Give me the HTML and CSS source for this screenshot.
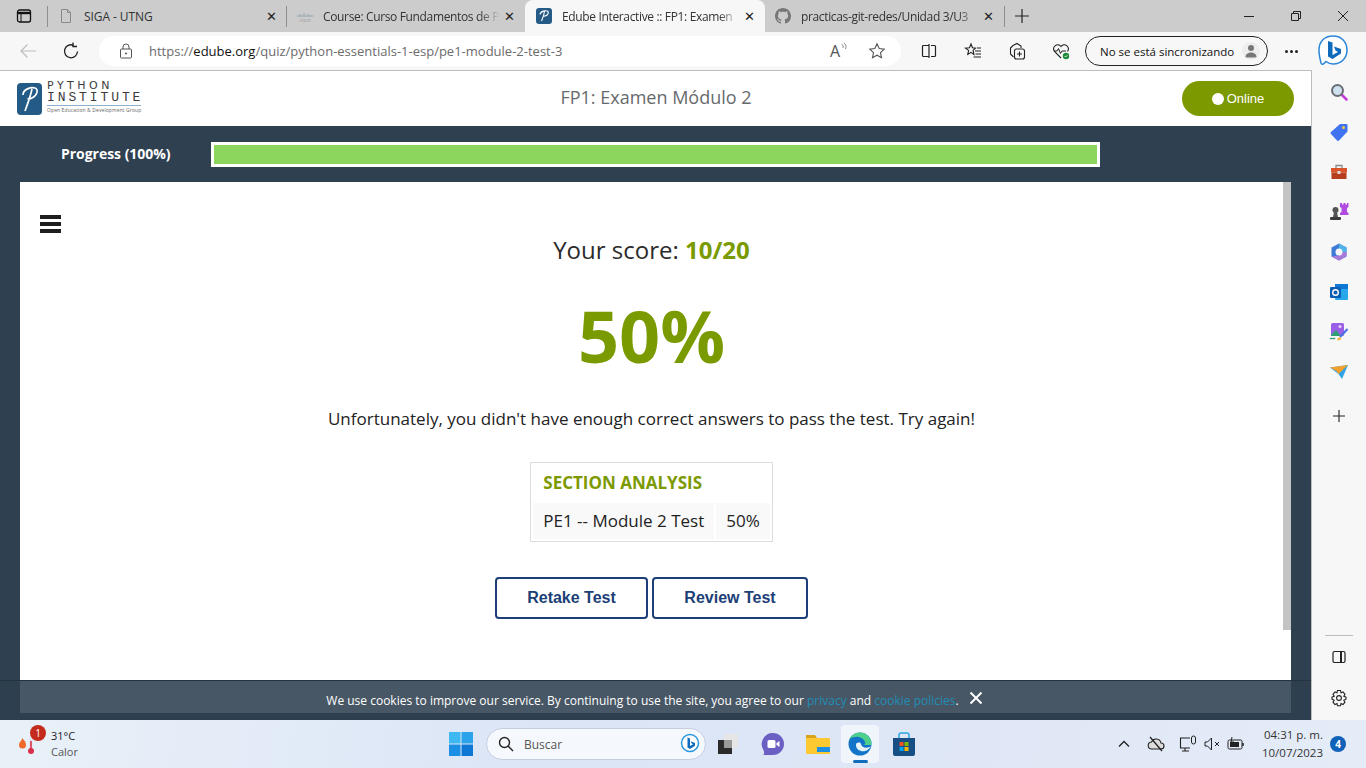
FILE: index.html
```html
<!DOCTYPE html>
<html lang="en">
<head>
  <meta charset="UTF-8" />
  <title>Edube Interactive :: FP1: Examen Módulo 2</title>
  <link rel="stylesheet" href="styles.css">
</head>
<body>

  <!-- Tabs -->
  <div class="tabstrip">
    <svg class="tab-menu" width="16" height="16" viewBox="0 0 16 16"><rect x="1.500" y="2" width="13" height="12" rx="2" fill="none" stroke="#111" stroke-width="1.300"/><path d="M1.500 5h13" stroke="#111" stroke-width="2.400"/><path d="M5 5v9" stroke="#111" stroke-width="1"/></svg>
    <span class="tab-sep first"></span>
    <div class="tab tab-siga">
      <svg width="16" height="16" viewBox="0 0 16 16"><path d="M3.500 1.500h6l3 3v10h-9z M9.500 1.500v3h3" fill="none" stroke="#8a8a8a"/></svg>
      <span class="tab-title">SIGA - UTNG</span>
      <span class="tab-x">✕</span>
    </div>
    <span class="tab-sep"></span>
    <div class="tab tab-course">
      <svg width="16" height="16" viewBox="0 0 16 16"><path d="M1 7v2M3 6v3M5 7v2M7 5v4M9 7v2M11 6v3M13 7v2M15 7v2" stroke="#8fa0a8" stroke-width="1"/><text x="8" y="14" font-size="5" text-anchor="middle" fill="#9a9a9a">cisco</text></svg>
      <span class="tab-title tab-fade">Course: Curso Fundamentos de P</span>
      <span class="tab-x">✕</span>
    </div>
    <div class="tab tab-active">
      <svg width="16" height="16" viewBox="0 0 16 16"><rect width="16" height="16" rx="3" fill="#235a86"/><path d="M5.500 13C7 9.500 8 6.500 8.500 3.500M4 6.500C4.500 3 10 2 12 3.500C13 5 11.500 7.500 9 8C8 8.200 7.200 8 6.800 7.800" fill="none" stroke="#fff" stroke-width="1.100"/></svg>
      <span class="tab-title tab-fade">Edube Interactive :: FP1: Examen</span>
      <span class="tab-x">✕</span>
    </div>
    <div class="tab tab-git">
      <svg width="16" height="16" viewBox="0 0 16 16"><path fill="#777" d="M8 0C3.580 0 0 3.580 0 8c0 3.540 2.290 6.530 5.470 7.590.4.070.55-.17.55-.38 0-.19-.01-.82-.01-1.490-2.010.37-2.530-.49-2.690-.94-.09-.23-.48-.94-.82-1.130-.28-.15-.68-.52-.01-.53.63-.01 1.080.58 1.230.82.720 1.210 1.870.87 2.330.66.070-.52.280-.87.510-1.070-1.780-.2-3.640-.89-3.640-3.950 0-.87.310-1.590.820-2.150-.08-.2-.36-1.020.08-2.120 0 0 .67-.21 2.200.82.640-.18 1.320-.27 2-.27s1.360.09 2 .27c1.530-1.040 2.200-.82 2.200-.82.440 1.100.160 1.920.08 2.120.51.560.820 1.270.820 2.150 0 3.070-1.870 3.750-3.650 3.950.290.250.540.730.540 1.480 0 1.070-.01 1.930-.01 2.200 0 .210.150.460.550.380A8.010 8.010 0 0 0 16 8c0-4.420-3.580-8-8-8z"/></svg>
      <span class="tab-title tab-fade">practicas-git-redes/Unidad 3/U3</span>
      <span class="tab-x">✕</span>
    </div>
    <span class="tab-sep"></span>
    <svg class="tab-new" width="16" height="16" viewBox="0 0 16 16"><path d="M8 1v14M1 8h14" stroke="#222" stroke-width="1.200"/></svg>
    <div class="win-buttons">
      <svg width="12" height="12" viewBox="0 0 12 12"><path d="M1 6.500h10" stroke="#222"/></svg>
      <svg width="12" height="12" viewBox="0 0 12 12"><path d="M3.500 3V1.500h7v7H9M1.500 3.500h7v7h-7z" fill="none" stroke="#222"/></svg>
      <svg width="12" height="12" viewBox="0 0 12 12"><path d="M1 1l10 10M11 1L1 11" stroke="#222"/></svg>
    </div>
  </div>

  <!-- Address bar -->
  <div class="toolbar">
    <svg class="tb-back" width="18" height="18" viewBox="0 0 18 18"><path d="M17 9H2M8.500 2.500L2 9l6.500 6.500" fill="none" stroke="#bdbdbd" stroke-width="1.200"/></svg>
    <svg class="tb-reload" width="18" height="18" viewBox="0 0 18 18"><path d="M15.500 9.500A6.500 6.500 0 1 1 11.500 3.300" fill="none" stroke="#222" stroke-width="1.300"/><path d="M11 0.500v4h4" fill="none" stroke="#222" stroke-width="1.300"/></svg>
    <div class="urlbar">
      <svg width="14" height="16" viewBox="0 0 14 16"><path d="M4 6V4a3 3 0 0 1 6 0v2" fill="none" stroke="#555"/><rect x="1.500" y="6" width="11" height="9" rx="1" fill="none" stroke="#555"/><circle cx="7" cy="10.500" r="1" fill="#555"/></svg>
      <span class="url">https://<b>edube.org</b>/quiz/python-essentials-1-esp/pe1-module-2-test-3</span>
      <span class="read-aloud">A</span>
      <svg class="read-waves" width="6" height="8" viewBox="0 0 6 8"><path d="M0.500 1C2 2 2.500 3.500 2 5M3 0C5 1.500 5.500 4 4.500 6" fill="none" stroke="#666" stroke-width=".8"/></svg>
      <svg class="url-star" width="18" height="18" viewBox="0 0 18 18"><path d="M9 1.800l2.200 4.700 5 .6-3.700 3.500 1 5.100L9 13.200l-4.500 2.500 1-5.100L1.800 7.100l5-.6z" fill="none" stroke="#555" stroke-width="1.100"/></svg>
    </div>
    <div class="tb-icons">
      <svg width="18" height="18" viewBox="0 0 18 18"><path d="M9 2v14M9 3.500H3.500a1 1 0 0 0-1 1v9a1 1 0 0 0 1 1H9M11 3.500h3.500a1 1 0 0 1 1 1v9a1 1 0 0 1-1 1H11" fill="none" stroke="#222" stroke-width="1.200"/></svg>
      <svg width="18" height="18" viewBox="0 0 18 18"><path d="M7 2l1.500 3.800 3 .3-2.400 2.300.8 4L7 10.300 3.800 12.400l.8-4L1.500 6.100l4-.3z" fill="none" stroke="#222" stroke-width="1.100"/><path d="M11 9h6M11.500 12h5.500M9.500 15h7.500M13 6h4" stroke="#222" stroke-width="1.100"/></svg>
      <svg width="18" height="18" viewBox="0 0 18 18"><path d="M5 3.500L2.500 6v6l3 3M5 3.500L9 1.500l4 2.500v2" fill="none" stroke="#222" stroke-width="1.100"/><rect x="6.500" y="7" width="10" height="10" rx="2" fill="none" stroke="#222" stroke-width="1.100"/><path d="M11.500 9.500v5M9 12h5" stroke="#222" stroke-width="1.100"/></svg>
      <svg width="18" height="18" viewBox="0 0 18 18"><path d="M9 16L2.500 9.500C-.500 5 5.500 0 9 4.500 12.500 0 18.500 5 15.500 9.500" fill="none" stroke="#222" stroke-width="1.100"/><path d="M2 9h3l1.500-2.500 2 5L10 9h4" fill="none" stroke="#222"/><circle cx="14" cy="14" r="3.200" fill="#1f8a3b"/><path d="M12.600 14l1 1 1.800-1.800" fill="none" stroke="#fff" stroke-width=".8"/></svg>
    </div>
    <div class="sync">
      <span>No se está sincronizando</span>
      <svg width="18" height="18" viewBox="0 0 18 18"><circle cx="9" cy="9" r="9" fill="#ededed"/><circle cx="9" cy="6" r="3" fill="#777"/><path d="M3.500 15c0-6 11-6 11 0 0 .700-11 .700-11 0z" fill="#777"/></svg>
    </div>
    <div class="tb-more"><i></i><i></i><i></i></div>
    <svg class="tb-bing" width="34" height="34" viewBox="0 0 34 34"><path d="M17 2C8 2 3 8 3 16c0 5 1 9 2 13 .500 1.500 2 1.500 3 .5l2-2c2 1.500 4.500 2.500 7 2.500 9 0 14-6.500 14-14S26 2 17 2z" fill="#fff" stroke="#2a86d8" stroke-width="1.500"/><path d="M12 7l4.500 1.500V21l5.500-3-2.500-1.500-1.500-4L25 15v4.500L16.500 25 12 22.500z" fill="#0f6cbd"/></svg>
  </div>

  <div class="main">
    <!-- Page -->
    <div class="page">
      <header class="site-header">
        <div class="logo">
          <svg width="25" height="32" viewBox="0 0 25 32"><rect width="25" height="32" rx="4" fill="#235a86"/><path d="M8 28C11 20 14 11 15 6M6 12C6 6 14 4 18 5C22 6 20 13 15 15C13 16 11.500 16 10.500 15.500" fill="none" stroke="#fff" stroke-width="1.700"/></svg>
          <div class="logo-text">
            <span class="logo-l1">PYTHON</span>
            <span class="logo-l2">INSTITUTE</span>
            <span class="logo-l3">Open Education &amp; Development Group</span>
          </div>
        </div>
        <div class="site-title">FP1: Examen Módulo 2</div>
        <div class="online"><i></i>Online</div>
      </header>

      <div class="progress-row">
        <span class="progress-label">Progress (100%)</span>
        <div class="progress-track"><div class="progress-fill" style="width: 100%"></div></div>
      </div>

      <div class="card">
        <div class="hamburger"><i></i><i></i><i></i></div>
        <div class="scrollbar"></div>
        <div class="result">
          <h2 class="score">Your score: <b>10/20</b></h2>
          <div class="percent">50%</div>
          <p class="message">Unfortunately, you didn't have enough correct answers to pass the test. Try again!</p>
          <table class="analysis">
            <tr><th colspan="2">SECTION ANALYSIS</th></tr>
            <tr><td>PE1 -- Module 2 Test</td><td>50%</td></tr>
          </table>
          <div class="actions">
            <a class="btn btn-retake">Retake Test</a>
            <a class="btn btn-review">Review Test</a>
          </div>
        </div>
      </div>

      <div class="cookies">
        <span class="cookies-text">We use cookies to improve our service. By continuing to use the site, you agree to our <a>privacy</a> and <a>cookie policies</a>.</span>
        <svg width="14" height="14" viewBox="0 0 14 14"><path d="M1.500 1.500l11 11M12.500 1.500l-11 11" stroke="#fff" stroke-width="2"/></svg>
      </div>
    </div>

    <!-- Edge sidebar -->
    <aside class="sidebar">
      <div class="side-icons">
        <svg width="18" height="18" viewBox="0 0 18 18"><path d="M11 11l5.500 5.500" stroke="#c13cd8" stroke-width="2.500" stroke-linecap="round"/><circle cx="7.500" cy="7.500" r="5.500" fill="#cfe0ee" stroke="#6a6f75" stroke-width="2"/></svg>
        <svg width="18" height="18" viewBox="0 0 18 18"><path d="M10 1h6.500a1 1 0 0 1 1 1v6.500L9 17.500a1.500 1.500 0 0 1-2 0L1 11a1.500 1.500 0 0 1 0-2z" fill="#3f73f0"/><circle cx="13.500" cy="4.500" r="1.500" fill="#f6c945"/></svg>
        <svg width="18" height="18" viewBox="0 0 18 18"><path d="M6 5V2.500h6V5" fill="none" stroke="#8a8a8a" stroke-width="1.300"/><rect x="1" y="5" width="16" height="4.500" fill="#d9542b"/><rect x="1.500" y="9.500" width="15" height="6.500" fill="#b53f1c"/><rect x="7.500" y="8" width="3" height="3" fill="#ddd"/></svg>
        <svg width="20" height="18" viewBox="0 0 20 18"><circle cx="6.500" cy="7" r="3" fill="#555"/><path d="M5 9h3l1 5H4z" fill="#555"/><rect x="1" y="14" width="11" height="3" rx="1" fill="#3c3c3c"/><path d="M11 0h2v1.500h1.500V0h2v1.500H18V0h1.500v4L18 5v4l1.500 1v2H11v-2l1.500-1V5L11 4z" fill="#b04ae0"/></svg>
        <svg width="18" height="18" viewBox="0 0 18 18"><path d="M9 .5l7.500 4v9L9 17.500 1.500 13.500v-9z" fill="#3f7bd6"/><path d="M9 .5l7.500 4V9h-4L9 5.500z" fill="#4fb4e8"/><path d="M1.500 13.500L9 17.500l7.500-4V9h-4L9 12.500z" fill="#a77ad8"/><circle cx="9" cy="9" r="3.500" fill="#f7f7f7"/></svg>
        <svg width="18" height="18" viewBox="0 0 18 18"><rect x="5" y="1" width="13" height="16" rx="1" fill="#28a8ea"/><rect x="5" y="1" width="13" height="5" fill="#0f78d4"/><rect x="0" y="4" width="11" height="11" rx="1" fill="#0a5fb4"/><circle cx="5.500" cy="9.500" r="2.800" fill="none" stroke="#fff" stroke-width="1.400"/></svg>
        <svg class="side-draw" width="20" height="20" viewBox="0 0 20 20"><rect x="2" y="1" width="13" height="13" rx="1.500" fill="#9a5fe6"/><path d="M2 13l5-5 5 6H2z" fill="#2f9f77"/><circle cx="11" cy="4.500" r="1.500" fill="#ead3ff"/><path d="M18.500 7L11 15" stroke="#4f6fe0" stroke-width="2.200"/><path d="M8 18c1-3 3-3.500 4-2s-2 3-4 2z" fill="#f3b23a"/><path d="M1 17c2-2 3 1 5-1" fill="none" stroke="#2f9f77" stroke-width="1.300"/></svg>
        <svg width="18" height="18" viewBox="0 0 18 18"><path d="M0 4.500L18 2l-6 14-3.500-5z" fill="#2ea4e6"/><path d="M0 4.500L18 2 8.500 11 6.500 8z" fill="#f3a02c"/></svg>
        <svg class="side-add" width="14" height="14" viewBox="0 0 14 14"><path d="M7 1v12M1 7h12" stroke="#222" stroke-width="1.100"/></svg>
      </div>
      <div class="side-bottom">
        <span class="side-rule"></span>
        <svg width="16" height="16" viewBox="0 0 16 16"><rect x="2" y="2.500" width="12" height="11" rx="1.500" fill="none" stroke="#222" stroke-width="1.200"/><path d="M10 2.500v11" stroke="#222" stroke-width="2"/></svg>
        <svg class="side-gear" width="18" height="18" viewBox="0 0 18 18"><circle cx="9" cy="9" r="2.400" fill="none" stroke="#222" stroke-width="1.100"/><path d="M7.500 1.500h3l.5 2.300 2-.9 2 2.400-1.200 1.900 2.200 1v2l-2.200 1 1.200 1.900-2 2.400-2-.9-.5 2.200h-3l-.5-2.200-2 .9-2-2.400 1.200-1.900-2.200-1v-2l2.200-1-1.200-1.900 2-2.400 2 .9z" fill="none" stroke="#222" stroke-width="1.100"/></svg>
      </div>
    </aside>
  </div>

  <!-- Windows taskbar -->
  <footer class="taskbar">
    <div class="weather">
      <svg width="22" height="26" viewBox="0 0 22 26"><path d="M1 14c0-3 3-4 3-7 2.500 2.500 4 4 4 7a3.500 3.500 0 0 1-7 0z" fill="#ef6a2a"/><rect x="11" y="4" width="4" height="16" rx="2" fill="#e3e9f2"/><rect x="12.200" y="10" width="1.600" height="10" fill="#d8324a"/><circle cx="13" cy="20" r="3" fill="#d8324a"/></svg>
      <span class="weather-badge">1</span>
      <div class="weather-text"><span>31°C</span><span class="weather-sub">Calor</span></div>
    </div>
    <div class="task-center">
      <svg class="start" width="24" height="24" viewBox="0 0 24 24"><rect width="11.500" height="11.500" fill="#3db8f0"/><rect x="12.500" width="11.500" height="11.500" fill="#2aa3ea"/><rect y="12.500" width="11.500" height="11.500" fill="#1a8fe3"/><rect x="12.500" y="12.500" width="11.500" height="11.500" fill="#0f78d4"/></svg>
      <div class="search">
        <svg width="16" height="16" viewBox="0 0 16 16"><circle cx="6.500" cy="6.500" r="5" fill="none" stroke="#222" stroke-width="1.400"/><path d="M10 10l5 5" stroke="#222" stroke-width="1.500"/></svg>
        <span>Buscar</span>
        <svg class="search-bing" width="20" height="22" viewBox="0 0 20 22"><circle cx="10" cy="10" r="8.500" fill="#fff" stroke="#2a96e0" stroke-width="1.500"/><path d="M7.500 4.500l2.500 1V13l3-1.800-1.500-1-.8-2L15 10v2.800L10 16l-2.500-1.500z" fill="#0f6cbd"/></svg>
      </div>
      <svg class="task-icon" width="24" height="24" viewBox="0 0 24 24"><rect x="8" y="2" width="14" height="14" fill="#e6e6e6"/><rect x="2" y="8" width="14" height="14" fill="#2a2a2a"/><rect x="8" y="8" width="8" height="8" fill="#9a9a9a"/></svg>
      <svg class="task-icon" width="24" height="24" viewBox="0 0 24 24"><path d="M12 1a11 11 0 0 1 0 22H2c2-1 1-3 .5-5A11 11 0 0 1 12 1z" fill="#6b5fc4"/><rect x="6.500" y="8" width="8" height="8" rx="1.500" fill="#fff"/><path d="M15.500 11l3-2v6l-3-2z" fill="#fff"/></svg>
      <svg class="task-icon" width="24" height="24" viewBox="0 0 24 24"><path d="M0 3h9l2 3H0z" fill="#d9a21b"/><rect y="6" width="24" height="16" rx="1" fill="#fcc933"/><rect x="11" y="15" width="13" height="5" fill="#1a8fe3"/></svg>
      <div class="task-active">
        <svg width="24" height="24" viewBox="0 0 24 24"><circle cx="12" cy="12" r="11.500" fill="#1174c9"/><path d="M23.500 12C23.500 5 18 .500 12 .500 7 .500 2.500 4 1 8c3-4 13-5 16 2 1 2-.500 3-2 3h8z" fill="#4fd08a"/><path d="M8 13c0 5 5 7 9 6 3-.500 5-3 6-5-2 2-9 3-10-2-.5-2-5-2-5 1z" fill="#e7f3fa"/></svg>
        <i></i>
      </div>
      <svg class="task-icon" width="24" height="26" viewBox="0 0 24 26"><path d="M7 7V4a2 2 0 0 1 2-2h6a2 2 0 0 1 2 2v3" fill="none" stroke="#2ba7e3" stroke-width="1.500"/><path d="M1 7h22v16a2 2 0 0 1-2 2H3a2 2 0 0 1-2-2z" fill="#174f84"/><rect x="7.500" y="11" width="4" height="4" fill="#f25022"/><rect x="12.500" y="11" width="4" height="4" fill="#7fba00"/><rect x="7.500" y="16" width="4" height="4" fill="#00a4ef"/><rect x="12.500" y="16" width="4" height="4" fill="#ffb900"/></svg>
    </div>
    <div class="tray">
      <svg width="12" height="8" viewBox="0 0 12 8"><path d="M1 6.500l5-5 5 5" fill="none" stroke="#222" stroke-width="1.300"/></svg>
      <svg class="tray-cloud" width="18" height="16" viewBox="0 0 18 16"><path d="M5 13a3.500 3.500 0 0 1-.5-7A5 5 0 0 1 14 7a3 3 0 0 1 0 6z" fill="#ddd" stroke="#222" stroke-width="1.100"/><path d="M3 1l12 14" stroke="#222" stroke-width="1.300"/></svg>
      <svg class="tray-net" width="18" height="18" viewBox="0 0 18 18"><path d="M11 3H1.500v10H11M6 13v3M3 16h7" fill="none" stroke="#222" stroke-width="1.100"/><rect x="12.500" y="1" width="4" height="8" rx="2" fill="none" stroke="#222"/></svg>
      <svg width="18" height="14" viewBox="0 0 18 14"><path d="M1 5v4h2.500L7.500 13V1L3.500 5z" fill="none" stroke="#222"/><path d="M11 5l4 4M15 5l-4 4" stroke="#222"/></svg>
      <svg class="tray-batt" width="18" height="14" viewBox="0 0 18 14"><rect x="1" y="3" width="14" height="9" rx="1.500" fill="none" stroke="#222"/><rect x="3" y="5" width="9" height="5" fill="#222"/><path d="M16 6v3" stroke="#222" stroke-width="1.500"/><path d="M5 0l-1 5h3l-1 4" fill="none" stroke="#222"/></svg>
      <div class="clock"><span>04:31 p. m.</span><span>10/07/2023</span></div>
      <span class="notif">4</span>
    </div>
  </footer>

</body>
</html>
```

FILE: styles.css
```css
* {
  box-sizing: border-box;
}
html, body {
  margin: 0;
  height: 768px;
  overflow: hidden;
}
body {
  font-family: "Open Sans", sans-serif;
  color: #222;
  background-color: #f7f7f7;
}
svg {
  display: block;
  flex-shrink: 0;
}

/* tabs */
.tabstrip {
  display: flex;
  align-items: center;
  height: 32px;
  background-color: #cccccc;
  font-size: 12px;
}
.tab-menu {
  margin: 0 0 0 16px;
}
.tab-sep {
  width: 1px;
  height: 21px;
  background-color: #8f8f8f;
}
.tab-sep.first {
  margin-left: 15px;
}
.tab {
  display: flex;
  align-items: center;
  height: 32px;
  color: #333;
}
.tab-title {
  flex: 1;
  overflow: hidden;
  white-space: nowrap;
  margin-left: 10px;
  letter-spacing: -0.07px;
}
.tab-fade {
  letter-spacing: -0.35px;
  -webkit-mask-image: linear-gradient(90deg, #000 88%, transparent);
  mask-image: linear-gradient(90deg, #000 88%, transparent);
}
.tab-x {
  font-size: 13px;
  color: #222;
  margin-left: 4px;
}
.tab-siga {
  width: 238px;
  padding: 0 9px 0 10px;
}
.tab-course {
  width: 238px;
  padding: 0 10px 0 10px;
}
.tab-active {
  width: 240px;
  padding: 0 10px 0 11px;
  background-color: #f7f7f7;
  border-radius: 8px 8px 0 0;
}
.tab-git {
  width: 239px;
  padding: 0 10px 0 10px;
}
.tab-new {
  margin-left: 9px;
}
.win-buttons {
  margin-left: auto;
  display: flex;
  gap: 35px;
  padding-right: 17px;
}

/* address bar */
.toolbar {
  display: flex;
  align-items: center;
  height: 38px;
  background-color: #f7f7f7;
}
.tb-back {
  margin-left: 19px;
}
.tb-reload {
  margin-left: 25px;
}
.urlbar {
  display: flex;
  align-items: center;
  width: 802px;
  height: 30px;
  margin-left: 19px;
  padding: 0 15px 0 20px;
  background-color: #fff;
  border-radius: 15px;
}
.url {
  margin-left: 16px;
  font-size: 13px;
  color: #6b6b6b;
  white-space: nowrap;
}
.url b {
  font-weight: 400;
  color: #111;
}
.read-aloud {
  margin-left: auto;
  font-size: 16px;
  line-height: 18px;
  color: #555;
}
.read-waves {
  margin: -8px 0 0 1px;
}
.url-star {
  margin-left: 21px;
}
.tb-icons {
  display: flex;
  gap: 26px;
  margin-left: 19px;
}
.sync {
  display: flex;
  align-items: center;
  justify-content: space-between;
  width: 183px;
  height: 30px;
  margin-left: 15px;
  padding: 0 7px 0 14px;
  border: 1px solid #222;
  border-radius: 15px;
  font-size: 11.500px;
  color: #111;
  white-space: nowrap;
}
.tb-more {
  display: flex;
  gap: 2px;
  margin-left: 17px;
}
.tb-more i {
  width: 3px;
  height: 3px;
  border-radius: 50%;
  background-color: #222;
}
.tb-bing {
  margin-left: 18px;
}

/* page + sidebar */
.main {
  display: flex;
  height: 650px;
}
.page {
  position: relative;
  width: 1312px;
  display: flex;
  flex-direction: column;
  border-top: 1px solid #bdbdbd;
  border-right: 1px solid #bdbdbd;
  background-color: #2f4050;
}
.site-header {
  display: grid;
  grid-template-columns: 1fr auto 1fr;
  align-items: center;
  height: 55px;
  padding: 0 17px;
  background-color: #fff;
}
.logo {
  display: flex;
  align-items: center;
  gap: 5px;
}
.logo-text {
  display: flex;
  flex-direction: column;
  width: 94px;
  margin-bottom: 2px;
  color: #3c3c3c;
}
.logo-l1 {
  font-family: "DejaVu Sans", sans-serif;
  font-size: 11px;
  letter-spacing: 3.500px;
  line-height: 10px;
}
.logo-l2 {
  font-family: "Liberation Mono", monospace;
  font-size: 13px;
  letter-spacing: 2.900px;
  line-height: 14px;
  white-space: nowrap;
  border-bottom: 1px solid #8db0cf;
}
.logo-l3 {
  font-size: 5px;
  letter-spacing: 0.1px;
  line-height: 8px;
  color: #666;
  white-space: nowrap;
}
.site-title {
  font-size: 18px;
  color: #676a6c;
  margin: 0 0 3px 1px;
}
.online {
  justify-self: end;
  display: flex;
  align-items: center;
  justify-content: center;
  gap: 3px;
  width: 112px;
  height: 35px;
  border-radius: 18px;
  background-color: #7d9900;
  color: #fff;
  font-family: "Liberation Sans", sans-serif;
  font-size: 13px;
}
.online i {
  width: 12px;
  height: 12px;
  border-radius: 50%;
  background-color: #fff;
}
.progress-row {
  display: flex;
  align-items: center;
  height: 56px;
}
.progress-label {
  width: 211px;
  padding: 0 0 2px 61px;
  color: #fff;
  font-size: 14px;
  font-weight: 700;
  letter-spacing: -0.03px;
  white-space: nowrap;
}
.progress-track {
  width: 889px;
  height: 25px;
  padding: 3px;
  background-color: #fff;
}
.progress-fill {
  height: 100%;
  background-color: #8cd65e;
}
.card {
  position: relative;
  width: 1271px;
  height: 531px;
  margin-left: 20px;
  background-color: #fff;
}
.hamburger {
  position: absolute;
  left: 20px;
  top: 33px;
  display: flex;
  flex-direction: column;
  gap: 3.500px;
}
.hamburger i {
  display: block;
  width: 21px;
  height: 3.500px;
  background-color: #1e1e1e;
}
.scrollbar {
  position: absolute;
  top: 0;
  right: 0;
  width: 8px;
  height: 448px;
  background-color: #c4c4c4;
}
.result {
  width: 1263px;
  padding-top: 52px;
  display: flex;
  flex-direction: column;
  align-items: center;
  text-align: center;
}
.score {
  margin: 0;
  font-size: 24px;
  line-height: 32px;
  font-weight: 400;
  color: #2b2b2b;
}
.score b, .percent {
  color: #7a9a01;
}
.percent {
  margin-top: 24px;
  font-size: 72px;
  line-height: 90px;
  font-weight: 700;
}
.message {
  margin: 27px 0 0;
  font-size: 17px;
  line-height: 24px;
  color: #222;
}
.analysis {
  margin-top: 31px;
  border: 1px solid #dddddd;
  border-spacing: 2px;
  border-collapse: separate;
  font-size: 17px;
  color: #222;
}
.analysis th {
  height: 36px;
  padding: 0 10px 2px;
  text-align: left;
  font-size: 17px;
  font-weight: 700;
  color: #7d9900;
}
.analysis td {
  height: 36px;
  padding: 0 10px 2px;
  background-color: #f9f9f9;
}
.actions {
  display: flex;
  gap: 4px;
  margin-top: 35px;
}
.btn {
  display: flex;
  align-items: center;
  justify-content: center;
  height: 42px;
  border: 2px solid #1c3f77;
  border-radius: 4px;
  background-color: #fff;
  color: #1c3f77;
  font-family: "Liberation Sans", sans-serif;
  font-size: 16px;
  font-weight: 700;
}
.btn-retake {
  width: 153px;
}
.btn-review {
  width: 156px;
}
.cookies {
  position: absolute;
  left: 0;
  right: 0;
  bottom: 0;
  height: 40px;
  display: flex;
  align-items: center;
  justify-content: center;
  gap: 10px;
  padding: 0 2px 5px 0;
  border-top: 1px solid #26323d;
  background-color: rgba(47, 64, 80, 0.88);
  color: #fff;
  font-size: 12px;
}
.cookies-text {
  margin-top: 5px;
}
.cookies a {
  color: #1f8db5;
}

/* edge sidebar */
.sidebar {
  width: 54px;
  display: flex;
  flex-direction: column;
  justify-content: space-between;
  align-items: center;
  padding-bottom: 13px;
}
.side-icons {
  display: flex;
  flex-direction: column;
  align-items: center;
  gap: 22px;
  padding-top: 13px;
}
.side-draw {
  margin: -1px 0;
}
.side-add {
  margin-top: 6px;
}
.side-bottom {
  display: flex;
  flex-direction: column;
  align-items: center;
  gap: 13px;
}
.side-rule {
  width: 28px;
  height: 1px;
  background-color: #bdbdbd;
}
.side-gear {
  margin-top: 11px;
}

/* taskbar */
.taskbar {
  position: relative;
  display: flex;
  align-items: center;
  height: 48px;
  background: linear-gradient(100deg, #e9f1f8 0%, #dbe5f6 40%, #dfe7f6 70%, #e4ecf8 100%);
  font-size: 11px;
}
.weather {
  position: relative;
  display: flex;
  align-items: center;
  width: 449px;
  padding-left: 18px;
}
.weather-badge {
  position: absolute;
  left: 30px;
  top: -3px;
  width: 16px;
  height: 16px;
  border-radius: 50%;
  background-color: #c42b1c;
  color: #fff;
  font-size: 10px;
  line-height: 16px;
  text-align: center;
}
.weather-text {
  display: flex;
  flex-direction: column;
  margin-left: 11px;
  line-height: 16px;
}
.weather-sub {
  color: #555;
}
.task-center {
  display: flex;
  align-items: center;
}
.search {
  display: flex;
  align-items: center;
  width: 220px;
  height: 32px;
  margin-left: 13px;
  padding: 0 5px 0 11px;
  border: 1px solid #c5cfe0;
  border-radius: 16px;
  background-color: #f5f8fc;
  font-size: 12px;
  color: #555;
}
.search span {
  margin-left: 10px;
}
.search-bing {
  margin-left: auto;
}
.task-icon {
  margin-left: 10px;
  margin-right: 11px;
}
.search + .task-icon {
  margin-left: 10px;
}
.task-active {
  position: relative;
  display: flex;
  align-items: center;
  justify-content: center;
  width: 38px;
  height: 38px;
  border-radius: 4px;
  background-color: #f0f4fb;
}
.task-active i {
  position: absolute;
  bottom: 0;
  left: 12px;
  width: 15px;
  height: 3px;
  border-radius: 2px;
  background-color: #0f6cbd;
}
.task-active + .task-icon {
  margin-left: 13px;
}
.tray {
  position: absolute;
  right: 0;
  top: 0;
  height: 48px;
  display: flex;
  align-items: center;
  padding-right: 20px;
}
.tray-cloud {
  margin: 0 14px 0 17px;
}
.tray-net {
  margin-right: 7px;
}
.tray-batt {
  margin-left: 5px;
}
.clock {
  display: flex;
  flex-direction: column;
  align-items: flex-end;
  margin-left: 17px;
  font-size: 11.500px;
  line-height: 18px;
  color: #333;
}
.notif {
  width: 16px;
  height: 16px;
  margin-left: 7px;
  border-radius: 50%;
  background-color: #0f62b8;
  color: #fff;
  font-size: 10px;
  font-weight: 700;
  line-height: 16px;
  text-align: center;
}
```
